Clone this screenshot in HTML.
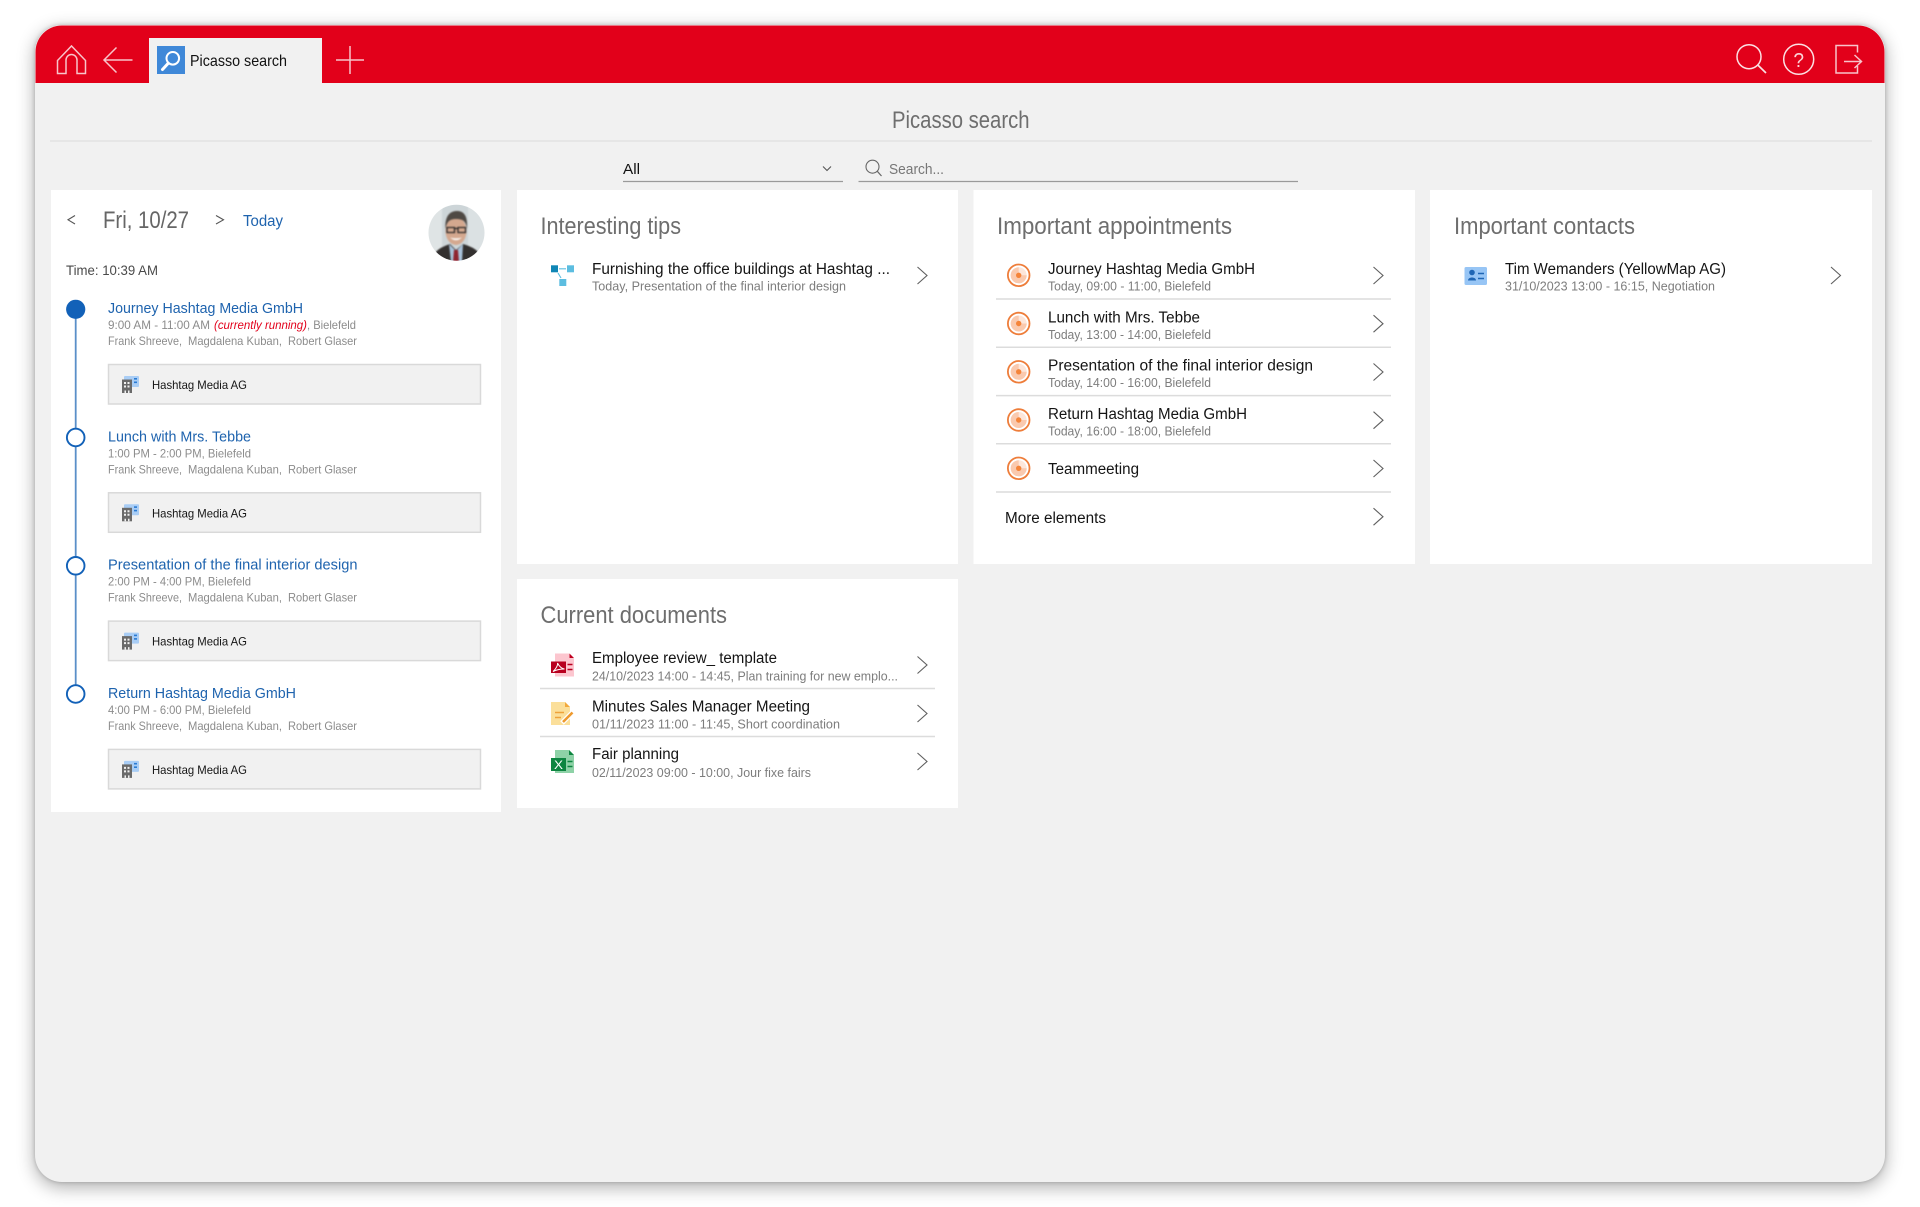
<!DOCTYPE html>
<html lang="en"><head><meta charset="utf-8"><title>Picasso search</title>
<style>
html,body{margin:0;padding:0;background:#fff;width:1920px;height:1207px;overflow:hidden}
#f{position:absolute;left:35px;top:25px;width:1850px;height:1157px;border-radius:27px;background:#f1f1f1;box-shadow:0 5px 18px rgba(0,0,0,.33),0 0 4px rgba(0,0,0,.2);border:0}
svg{position:absolute;left:0;top:0;filter:blur(.3px)}
text{font-family:"Liberation Sans",sans-serif;white-space:pre}
.h{font-size:24px;fill:#6e6e6e}
.t{font-size:15.5px;fill:#141414}
.s{font-size:12.5px;fill:#7d7d7d}
.b{font-size:15px;fill:#1e63ae}
.g{font-size:11.8px;fill:#8c8c8c}
.c{font-size:12px;fill:#151515}
.ch{fill:none;stroke:#5f5f5f;stroke-width:1.1}
.sep{stroke:#dcdcdc;stroke-width:1.5}
.w{fill:none;stroke:#f8c4ca;stroke-width:1.5}
.avg{filter:blur(.8px)}
</style></head><body>
<div id="f"></div>
<svg width="1920" height="1207" viewBox="0 0 1920 1207" xmlns="http://www.w3.org/2000/svg">
<defs>
<clipPath id="av"><circle cx="456.500" cy="232.700" r="28"/></clipPath>
<path id="chev" class="ch" d="M0 -8.500L9.500 0L0 8.500"/>
<g id="bld">
<rect x="124" y="376" width="15" height="11" rx="1" fill="#a9cdf5"/>
<rect x="134" y="378" width="3" height="1.600" fill="#2a7bd3"/><rect x="134" y="381.500" width="3" height="1.600" fill="#2a7bd3"/>
<rect x="122" y="379.500" width="10" height="13.500" fill="#6a6a6a"/>
<path d="M124 382h2v2h-2zM127.500 382h2v2h-2zM124 385.500h2v2h-2zM127.500 385.500h2v2h-2zM124.500 390.500h1.500v2.500h-1.500zM128 390.500h1.500v2.500h-1.500z" fill="#f1f1f1"/>
</g>
<g id="ap">
<circle cx="0" cy="0" r="10.800" fill="#fff" stroke="#ee7d3a" stroke-width="1.800"/>
<circle cx="0" cy="0" r="8" fill="#fde6da"/>
<path d="M0 0V-8A8 8 0 1 0 8 0Z" fill="#fac9ae"/>
<circle cx="0" cy="0" r="2.700" fill="#f5843a"/>
</g>
</defs>

<!-- header -->
<path d="M35.500 83V52a26.500 26.500 0 0 1 26.500-26.500H1858a26.500 26.500 0 0 1 26.500 26.500V83Z" fill="#e2001a"/>
<path class="w" d="M57.500 73.500V60.500L71.500 46L85.500 60.500V73.500H77V60a5.500 5.500 0 0 0-11 0V73.500Z"/>
<path class="w" d="M132.500 60H104M116.500 47.500L104 60L116.500 72.500"/>
<rect x="149" y="38" width="173" height="45.500" fill="#f1f1f1"/>
<rect x="157" y="46" width="28" height="28" fill="#3f88d8"/>
<circle cx="172.800" cy="58.300" r="6.300" fill="#3f88d8" stroke="#fff" stroke-width="2"/>
<path d="M168 63.500L162.500 69.500" stroke="#fff" stroke-width="3" stroke-linecap="round"/>
<text x="190" y="66" textLength="97" lengthAdjust="spacingAndGlyphs" style="font-size:16px;fill:#111">Picasso search</text>
<path class="w" d="M336 60H364M350 46V74"/>
<circle cx="1749" cy="56.700" r="12" fill="none" stroke="#fbe0e3" stroke-width="1.500"/>
<path d="M1757.800 65L1766 73" stroke="#fbe0e3" stroke-width="1.700" fill="none"/>
<circle cx="1798.700" cy="59.300" r="15" fill="none" stroke="#fbe0e3" stroke-width="1.500"/>
<text x="1793.500" y="67" style="font-size:20px;fill:#fbd5d9" textLength="10.500" lengthAdjust="spacingAndGlyphs">?</text>
<path class="w" d="M1857.500 52.500V45.500H1836V73H1857.500V66M1844 61.500H1861.500M1854.500 55L1861.500 61.500L1854.500 68"/>

<!-- title bar -->
<text x="892" y="128" class="h" textLength="137.500" lengthAdjust="spacingAndGlyphs">Picasso search</text>
<path d="M50 141H1872" stroke="#e3e3e3" stroke-width="1.500"/>
<text x="623" y="174" style="font-size:15px;fill:#111" textLength="17" lengthAdjust="spacingAndGlyphs">All</text>
<path d="M623 181.500H843" stroke="#9a9a9a" stroke-width="1.200"/>
<path d="M823 166.500L827 170.500L831 166.500" fill="none" stroke="#555" stroke-width="1.100"/>
<path d="M858.500 181.500H1298" stroke="#9a9a9a" stroke-width="1.200"/>
<circle cx="872.500" cy="166.700" r="6.500" fill="none" stroke="#666" stroke-width="1.100"/>
<path d="M877.300 171.300L881.500 176" stroke="#666" stroke-width="1.200"/>
<text x="889" y="174" style="font-size:14.500px;fill:#777" textLength="55" lengthAdjust="spacingAndGlyphs">Search...</text>

<!-- cards -->
<rect x="51" y="190" width="450" height="622" fill="#fff"/>
<rect x="517" y="190" width="441" height="374" fill="#fff"/>
<rect x="517" y="579" width="441" height="229" fill="#fff"/>
<rect x="973.500" y="190" width="441.500" height="374" fill="#fff"/>
<rect x="1430" y="190" width="442" height="374" fill="#fff"/>

<!-- calendar -->
<path d="M75 215.500L68 219.800L75 224" fill="none" stroke="#555" stroke-width="1.100"/>
<text x="103" y="228" style="font-size:24px;fill:#666" textLength="86" lengthAdjust="spacingAndGlyphs">Fri, 10/27</text>
<path d="M216 215.500L223.500 219.800L216 224" fill="none" stroke="#555" stroke-width="1.100"/>
<text x="243" y="226" style="font-size:15.500px;fill:#1e63ae" textLength="40" lengthAdjust="spacingAndGlyphs">Today</text>
<text x="66" y="275" style="font-size:13.500px;fill:#4a4a4a" textLength="92" lengthAdjust="spacingAndGlyphs">Time: 10:39 AM</text>
<g clip-path="url(#av)"><g class="avg">
<rect x="426" y="202" width="62" height="62" fill="#cdd5d8"/>
<rect x="426" y="202" width="16" height="62" fill="#dfe4e5"/><rect x="468" y="202" width="20" height="62" fill="#dbe1e3"/>
<path d="M432 262C433 250 442 247 450 244L456 250L463 244C472 247 481 250 482 262Z" fill="#33302f"/>
<path d="M449 244L456 251L463 244L462 262H451Z" fill="#a9c2da"/>
<path d="M454 250H458L459 262H453Z" fill="#8f2330"/>
<ellipse cx="456" cy="231" rx="10.500" ry="14" fill="#d4a88f"/>
<path d="M445.500 229C444.500 216 450 211 457 211C464 211 468 216 467 229C466 221 463 219 456 219C449 219 447 222 445.500 229Z" fill="#4f4944"/>
<path d="M447 227.500H454.500V232.500H447ZM458 227.500H465.500V232.500H458ZM454.500 228.500H458" fill="none" stroke="#2d2a29" stroke-width="1.300"/>
<path d="M450 237.500Q456 243 462 237.500Q456 239 450 237.500Z" fill="#fbf7f3"/>
</g></g>

<path d="M75.700 309V693" stroke="#5a8fc8" stroke-width="1.800"/>
<circle cx="75.700" cy="309.300" r="9.600" fill="#1261b8"/>
<g fill="#fff" stroke="#1261b8" stroke-width="1.900">
<circle cx="75.700" cy="437.500" r="8.800"/><circle cx="75.700" cy="565.800" r="8.800"/><circle cx="75.700" cy="694" r="8.800"/>
</g>

<text x="108" y="313" class="b" textLength="195" lengthAdjust="spacingAndGlyphs">Journey Hashtag Media GmbH</text>
<text x="108" y="329" class="g" textLength="102" lengthAdjust="spacingAndGlyphs">9:00 AM - 11:00 AM</text>
<text x="214" y="329" style="font-size:11.800px;font-style:italic;fill:#e2001a" textLength="93" lengthAdjust="spacingAndGlyphs">(currently running)</text>
<text x="307" y="329" class="g" textLength="49" lengthAdjust="spacingAndGlyphs">, Bielefeld</text>
<text x="108" y="345" class="g" textLength="74" lengthAdjust="spacingAndGlyphs">Frank Shreeve,</text><text x="188" y="345" class="g" textLength="94" lengthAdjust="spacingAndGlyphs">Magdalena Kuban,</text><text x="288" y="345" class="g" textLength="69" lengthAdjust="spacingAndGlyphs">Robert Glaser</text>
<rect x="108.500" y="364.500" width="372" height="39.500" fill="#f1f1f1" stroke="#d9d9d9" stroke-width="1.500"/>
<use href="#bld"/>
<text x="152" y="389" class="c" textLength="95" lengthAdjust="spacingAndGlyphs">Hashtag Media AG</text>

<text x="108" y="441.300" class="b" textLength="143" lengthAdjust="spacingAndGlyphs">Lunch with Mrs. Tebbe</text>
<text x="108" y="457.300" class="g" textLength="143" lengthAdjust="spacingAndGlyphs">1:00 PM - 2:00 PM, Bielefeld</text>
<text x="108" y="473.300" class="g" textLength="74" lengthAdjust="spacingAndGlyphs">Frank Shreeve,</text><text x="188" y="473.300" class="g" textLength="94" lengthAdjust="spacingAndGlyphs">Magdalena Kuban,</text><text x="288" y="473.300" class="g" textLength="69" lengthAdjust="spacingAndGlyphs">Robert Glaser</text>
<rect x="108.500" y="492.800" width="372" height="39.500" fill="#f1f1f1" stroke="#d9d9d9" stroke-width="1.500"/>
<use href="#bld" y="128.300"/>
<text x="152" y="517.300" class="c" textLength="95" lengthAdjust="spacingAndGlyphs">Hashtag Media AG</text>

<text x="108" y="569.600" class="b" textLength="249.500" lengthAdjust="spacingAndGlyphs">Presentation of the final interior design</text>
<text x="108" y="585.600" class="g" textLength="143" lengthAdjust="spacingAndGlyphs">2:00 PM - 4:00 PM, Bielefeld</text>
<text x="108" y="601.600" class="g" textLength="74" lengthAdjust="spacingAndGlyphs">Frank Shreeve,</text><text x="188" y="601.600" class="g" textLength="94" lengthAdjust="spacingAndGlyphs">Magdalena Kuban,</text><text x="288" y="601.600" class="g" textLength="69" lengthAdjust="spacingAndGlyphs">Robert Glaser</text>
<rect x="108.500" y="621.100" width="372" height="39.500" fill="#f1f1f1" stroke="#d9d9d9" stroke-width="1.500"/>
<use href="#bld" y="256.600"/>
<text x="152" y="645.600" class="c" textLength="95" lengthAdjust="spacingAndGlyphs">Hashtag Media AG</text>

<text x="108" y="697.900" class="b" textLength="188" lengthAdjust="spacingAndGlyphs">Return Hashtag Media GmbH</text>
<text x="108" y="713.900" class="g" textLength="143" lengthAdjust="spacingAndGlyphs">4:00 PM - 6:00 PM, Bielefeld</text>
<text x="108" y="729.900" class="g" textLength="74" lengthAdjust="spacingAndGlyphs">Frank Shreeve,</text><text x="188" y="729.900" class="g" textLength="94" lengthAdjust="spacingAndGlyphs">Magdalena Kuban,</text><text x="288" y="729.900" class="g" textLength="69" lengthAdjust="spacingAndGlyphs">Robert Glaser</text>
<rect x="108.500" y="749.400" width="372" height="39.500" fill="#f1f1f1" stroke="#d9d9d9" stroke-width="1.500"/>
<use href="#bld" y="384.900"/>
<text x="152" y="773.900" class="c" textLength="95" lengthAdjust="spacingAndGlyphs">Hashtag Media AG</text>

<!-- tips -->
<text x="540.500" y="234" class="h" textLength="140.500" lengthAdjust="spacingAndGlyphs">Interesting tips</text>
<rect x="551" y="265.300" width="7" height="7" fill="#0f86b5"/><rect x="567" y="265.300" width="7" height="7" fill="#5cbde0"/><rect x="559.300" y="279" width="7" height="7" fill="#5cbde0"/>
<path d="M559 268.800H566M558 273L561 278" stroke="#5cbde0" stroke-width="1.100"/>
<text x="592" y="274" class="t" textLength="298" lengthAdjust="spacingAndGlyphs">Furnishing the office buildings at Hashtag ...</text>
<text x="592" y="290.500" class="s" textLength="254" lengthAdjust="spacingAndGlyphs">Today, Presentation of the final interior design</text>
<use href="#chev" x="917.500" y="275.500"/>

<!-- documents -->
<text x="540.500" y="623" class="h" textLength="186.500" lengthAdjust="spacingAndGlyphs">Current documents</text>
<path d="M555 653.500H569L574 658.500V676.500H555Z" fill="#fcc6cf"/><path d="M569.500 653.500L574 658H569.500Z" fill="#c00020"/>
<rect x="551" y="661.500" width="15" height="11.500" fill="#b8001f"/>
<path d="M553 671.500C556 669 558 665 557.500 663C559 666 561 668.500 564.500 669C561 669 556 670 553 671.500Z" fill="none" stroke="#fff" stroke-width="1"/>
<path d="M567.500 664.500H572.500M567.500 669.500H572.500" stroke="#b8001f" stroke-width="1.500"/>
<text x="592" y="663" class="t" textLength="185" lengthAdjust="spacingAndGlyphs">Employee review_ template</text>
<text x="592" y="680.500" class="s" textLength="306" lengthAdjust="spacingAndGlyphs">24/10/2023 14:00 - 14:45, Plan training for new emplo...</text>
<use href="#chev" x="917.500" y="665"/>
<path class="sep" d="M540 688.500H935"/>
<path d="M551 702H565L570 707V725H551Z" fill="#fbdf9a"/><path d="M565 702L570 707H565Z" fill="#f2a93b"/>
<path d="M555 712.500H564M555 717.500H561" stroke="#eda23a" stroke-width="1.500"/>
<path d="M562 723L572.500 712.500" stroke="#fff" stroke-width="5"/><path d="M563 722L572.500 712.500" stroke="#ee9a2e" stroke-width="2.600"/>
<text x="592" y="711.500" class="t" textLength="218" lengthAdjust="spacingAndGlyphs">Minutes Sales Manager Meeting</text>
<text x="592" y="728.700" class="s" textLength="248" lengthAdjust="spacingAndGlyphs">01/11/2023 11:00 - 11:45, Short coordination</text>
<use href="#chev" x="917.500" y="713.500"/>
<path class="sep" d="M540 736.500H935"/>
<path d="M555 750H569L574 755V773H555Z" fill="#8ed2a7"/><path d="M569 750L574 755H569Z" fill="#0d8540"/>
<rect x="551" y="758" width="15" height="13" fill="#0d8540"/>
<text x="554" y="769" style="font-size:12px;fill:#fff" textLength="9" lengthAdjust="spacingAndGlyphs">X</text>
<path d="M567.500 761.500H572.500M567.500 766.500H572.500" stroke="#0d8540" stroke-width="1.500"/>
<text x="592" y="759" class="t" textLength="87" lengthAdjust="spacingAndGlyphs">Fair planning</text>
<text x="592" y="777" class="s" textLength="219" lengthAdjust="spacingAndGlyphs">02/11/2023 09:00 - 10:00, Jour fixe fairs</text>
<use href="#chev" x="917.500" y="761.500"/>

<!-- appointments -->
<text x="997" y="234" class="h" textLength="235" lengthAdjust="spacingAndGlyphs">Important appointments</text>
<use href="#ap" x="1018.700" y="275.300"/>
<text x="1048" y="274" class="t" textLength="207" lengthAdjust="spacingAndGlyphs">Journey Hashtag Media GmbH</text>
<text x="1048" y="290.500" class="s" textLength="163" lengthAdjust="spacingAndGlyphs">Today, 09:00 - 11:00, Bielefeld</text>
<use href="#chev" x="1373.500" y="275.500"/>
<path class="sep" d="M996 299H1391"/>
<use href="#ap" x="1018.700" y="323.500"/>
<text x="1048" y="322.300" class="t" textLength="152" lengthAdjust="spacingAndGlyphs">Lunch with Mrs. Tebbe</text>
<text x="1048" y="338.800" class="s" textLength="163" lengthAdjust="spacingAndGlyphs">Today, 13:00 - 14:00, Bielefeld</text>
<use href="#chev" x="1373.500" y="323.700"/>
<path class="sep" d="M996 347.300H1391"/>
<use href="#ap" x="1018.700" y="371.800"/>
<text x="1048" y="370.600" class="t" textLength="265" lengthAdjust="spacingAndGlyphs">Presentation of the final interior design</text>
<text x="1048" y="387.100" class="s" textLength="163" lengthAdjust="spacingAndGlyphs">Today, 14:00 - 16:00, Bielefeld</text>
<use href="#chev" x="1373.500" y="372"/>
<path class="sep" d="M996 395.600H1391"/>
<use href="#ap" x="1018.700" y="420"/>
<text x="1048" y="418.800" class="t" textLength="199" lengthAdjust="spacingAndGlyphs">Return Hashtag Media GmbH</text>
<text x="1048" y="435.300" class="s" textLength="163" lengthAdjust="spacingAndGlyphs">Today, 16:00 - 18:00, Bielefeld</text>
<use href="#chev" x="1373.500" y="420.200"/>
<path class="sep" d="M996 443.800H1391"/>
<use href="#ap" x="1018.700" y="468.300"/>
<text x="1048" y="474" class="t" textLength="91" lengthAdjust="spacingAndGlyphs">Teammeeting</text>
<use href="#chev" x="1373.500" y="468.500"/>
<path class="sep" d="M996 492H1391"/>
<text x="1005" y="523" class="t" textLength="101" lengthAdjust="spacingAndGlyphs">More elements</text>
<use href="#chev" x="1373.500" y="516.700"/>

<!-- contacts -->
<text x="1454" y="234" class="h" textLength="181" lengthAdjust="spacingAndGlyphs">Important contacts</text>
<rect x="1464.500" y="267" width="22.500" height="18" rx="1.500" fill="#97c5f5"/>
<circle cx="1472" cy="272.500" r="2.800" fill="#1f66b5"/><path d="M1468 280.500C1468 276.500 1476 276.500 1476 280.500Z" fill="#1f66b5"/>
<path d="M1478 273.500H1484M1478 278.500H1484" stroke="#1f66b5" stroke-width="1.500"/>
<text x="1505" y="274" class="t" textLength="221" lengthAdjust="spacingAndGlyphs">Tim Wemanders (YellowMap AG)</text>
<text x="1505" y="290.500" class="s" textLength="210" lengthAdjust="spacingAndGlyphs">31/10/2023 13:00 - 16:15, Negotiation</text>
<use href="#chev" x="1831" y="275.500"/>
</svg>
</body></html>
